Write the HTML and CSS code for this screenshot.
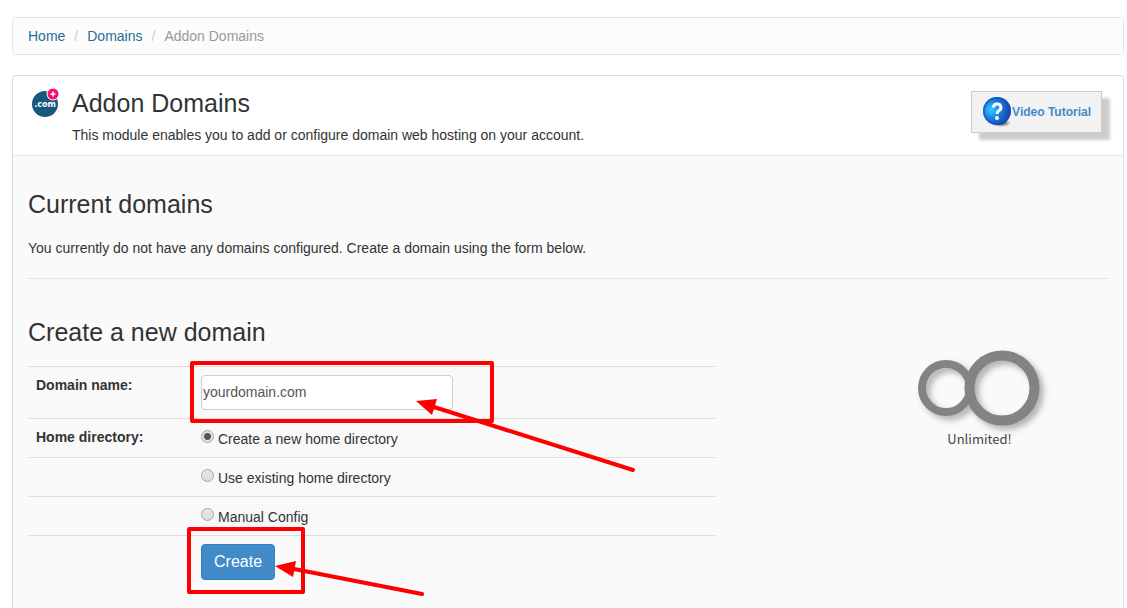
FILE: index.html
```html
<!DOCTYPE html>
<html lang="en">
<head>
    <meta charset="UTF-8">
    <meta name="viewport" content="width=device-width, initial-scale=1.0">
    <title>Addon Domains</title>
    <link rel="stylesheet" href="styles.css">
</head>
<body>
    <ol class="breadcrumb">
        <li><a href="#">Home</a></li>
        <li><a href="#">Domains</a></li>
        <li class="active">Addon Domains</li>
    </ol>

    <div class="panel">
        <div class="panel-heading">
            <svg class="module-icon" viewBox="0 0 28 30" width="28" height="30" aria-hidden="true">
                <circle cx="14" cy="16" r="13" fill="#17597c"/>
                <circle cx="22" cy="6" r="6.500" fill="#fff"/>
                <circle cx="22" cy="6" r="5.500" fill="#fb0d6c"/>
                <path d="M22 3.500v5M19.500 6h5" stroke="#fff" stroke-width="1.600"/>
                <text x="14" y="19" text-anchor="middle">.com</text>
            </svg>
            <div class="module-title">
                <h1>Addon Domains</h1>
                <p>This module enables you to add or configure domain web hosting on your account.</p>
            </div>
            <a class="video-btn" href="#">
                <svg viewBox="0 0 30 30" width="30" height="30" aria-hidden="true">
                    <defs>
                        <radialGradient id="ball" cx="30%" cy="45%" r="65%">
                            <stop offset="0" stop-color="#30d0ff"/>
                            <stop offset="0.5" stop-color="#1a7ee4"/>
                            <stop offset="1" stop-color="#1349b0"/>
                        </radialGradient>
                        <radialGradient id="ground">
                            <stop offset="0" stop-color="#222"/>
                            <stop offset="1" stop-color="#222" stop-opacity="0"/>
                        </radialGradient>
                    </defs>
                    <ellipse cx="19" cy="26" rx="10" ry="4" fill="url(#ground)"/>
                    <circle cx="15" cy="14" r="14" fill="url(#ball)"/>
                    <circle cx="15" cy="14" r="13" fill="none" stroke="#1550b8" stroke-width="2" opacity="0.6"/>
                    <path d="M11.500 10.500a3.700 3.500 0 1 1 5.500 3q-2 1.200-2 3.500" fill="none" stroke="#fff" stroke-width="3"/>
                    <circle cx="15" cy="21" r="2" fill="#fff"/>
                </svg>
                <span>Video Tutorial</span>
            </a>
        </div>

        <div class="panel-body">
            <h2>Current domains</h2>
            <p>You currently do not have any domains configured. Create a domain using the form below.</p>
            <hr>

            <h2>Create a new domain</h2>
            <div class="create-row">
                <form class="create-form">
                    <table class="form-table">
                        <tr>
                            <th><label for="domain">Domain name:</label></th>
                            <td class="field"><input type="text" id="domain" name="domain" value="yourdomain.com"></td>
                        </tr>
                        <tr>
                            <th>Home directory:</th>
                            <td><label class="radio"><input type="radio" name="home" value="new" checked>Create a new home directory</label></td>
                        </tr>
                        <tr>
                            <th></th>
                            <td><label class="radio"><input type="radio" name="home" value="existing">Use existing home directory</label></td>
                        </tr>
                        <tr>
                            <th></th>
                            <td><label class="radio"><input type="radio" name="home" value="manual">Manual Config</label></td>
                        </tr>
                        <tr>
                            <th></th>
                            <td class="field"><button type="submit" class="create-btn">Create</button></td>
                        </tr>
                    </table>

                    <!-- highlights and arrows drawn over the form -->
                    <svg class="annotations" width="620" height="240" aria-hidden="true">
                        <g fill="none" stroke="#f00" stroke-width="4" stroke-linecap="round" stroke-linejoin="round">
                            <rect x="164" y="-3" width="300" height="58"/>
                            <rect x="161" y="163" width="114" height="63"/>
                            <path d="M406 41L605 104M266 203L394 228"/>
                        </g>
                        <path d="M388 35L409 33L404 49ZM247 200L268 195L265 211Z" fill="#f00"/>
                    </svg>
                </form>

                <div class="quota">
                    <svg viewBox="0 0 132 82" width="132" height="82" aria-hidden="true">
                        <g fill="none" stroke="#838383">
                            <circle cx="32" cy="41" r="24" stroke-width="8"/>
                            <circle cx="88" cy="41" r="32.500" stroke-width="10"/>
                        </g>
                    </svg>
                    <span>Unlimited!</span>
                </div>
            </div>
        </div>
    </div>
</body>
</html>
```

FILE: styles.css
```css
* {
    box-sizing: border-box;
}
body {
    margin: 0;
    padding: 17px 3px 0 12px;
    font-family: "Liberation Sans", Arial, sans-serif;
    font-size: 14px;
    line-height: 20px;
    color: #333;
    background-color: #fff;
}
a {
    color: #286f94;
    text-decoration: none;
}
p {
    margin: 0;
}
h1,
h2 {
    margin: 0;
    font-size: 25px;
    font-weight: normal;
    line-height: 28px;
}

/* breadcrumb */
.breadcrumb {
    display: flex;
    margin: 0 0 20px;
    padding: 8px 15px;
    list-style: none;
    background-color: #fcfcfc;
    border: 1px solid #e5e5e5;
    border-radius: 4px;
}
.breadcrumb li + li::before {
    content: "/";
    padding: 0 9px;
    color: #ccc;
}
.breadcrumb .active {
    color: #999;
}

/* panel */
.panel {
    min-height: calc(100vh - 75px);
    background-color: #fafafa;
    border: 1px solid #ddd;
    border-bottom: none;
    border-radius: 4px 4px 0 0;
}
.panel-heading {
    display: flex;
    align-items: flex-start;
    height: 80px;
    padding: 12px 21px 0 18px;
    background-color: #fff;
    border-bottom: 1px solid #e5e5e5;
    border-radius: 4px 4px 0 0;
}
.module-icon {
    margin-right: 13px;
}
.module-icon text {
    font-family: "DejaVu Sans", sans-serif;
    font-size: 8px;
    font-weight: bold;
    fill: #fff;
}
.module-title {
    flex: 1;
    padding-top: 1px;
}
.module-title p {
    margin-top: 8px;
}
.video-btn {
    display: flex;
    align-items: center;
    height: 42px;
    margin-top: 3px;
    padding: 0 10px;
    font-size: 12px;
    font-weight: bold;
    color: #428bca;
    background-color: #f2f2f2;
    border: 1px solid #ccc;
    box-shadow: 8px 7px 3px #ccc;
}
.panel-body {
    padding: 34px 15px 40px;
}
.panel-body > p {
    margin-top: 20px;
}
.panel-body hr {
    margin: 20px 0 39px;
    border: 0;
    border-top: 1px solid #e5e5e5;
}

/* create form */
.create-row {
    display: flex;
    justify-content: space-between;
    margin-top: 20px;
}
.create-form {
    position: relative;
    flex: 0 1 687px;
}
.form-table {
    width: 100%;
    border-collapse: separate;
    border-spacing: 0;
    background-color: #f9f9f9;
}
.form-table th,
.form-table td {
    height: 39px;
    padding: 8px;
    text-align: left;
    vertical-align: top;
    border-top: 1px solid #ddd;
}
.form-table th {
    width: 165px;
}
.form-table td.field {
    height: 52px;
}
.form-table input[type="text"] {
    display: block;
    width: 252px;
    height: 35px;
    padding: 0 1px 2px;
    font: inherit;
    color: #555;
    background-color: #fff;
    border: 1px solid #ccc;
    border-radius: 4px;
}
.radio {
    display: flex;
    align-items: flex-start;
    gap: 4px;
    padding-top: 2px;
}
.radio input {
    appearance: none;
    flex: none;
    width: 13px;
    height: 13px;
    margin: 1px 0 0;
    border: 1px solid #a5a5a5;
    border-radius: 50%;
    background: linear-gradient(#e8e8e8, #dcdcdc);
}
.radio input:checked {
    background: radial-gradient(circle, #555 0 3px, #e4e4e4 4px);
}
.create-btn {
    display: block;
    height: 36px;
    padding: 0 12px;
    font-family: inherit;
    font-size: 16px;
    color: #fff;
    background-color: #428bca;
    border: 1px solid #357ebd;
    border-radius: 4px;
}
.annotations {
    position: absolute;
    top: 0;
    left: 0;
    overflow: visible;
    pointer-events: none;
}

/* quota */
.quota {
    display: flex;
    flex-direction: column;
    align-items: center;
    width: 257px;
    margin-top: -19px;
    font-family: "Noto Sans CJK SC", sans-serif;
    font-size: 13px;
    color: #444;
}
.quota svg {
    overflow: visible;
    filter: drop-shadow(4px 4px 3px rgba(0, 0, 0, 0.3));
}
```
